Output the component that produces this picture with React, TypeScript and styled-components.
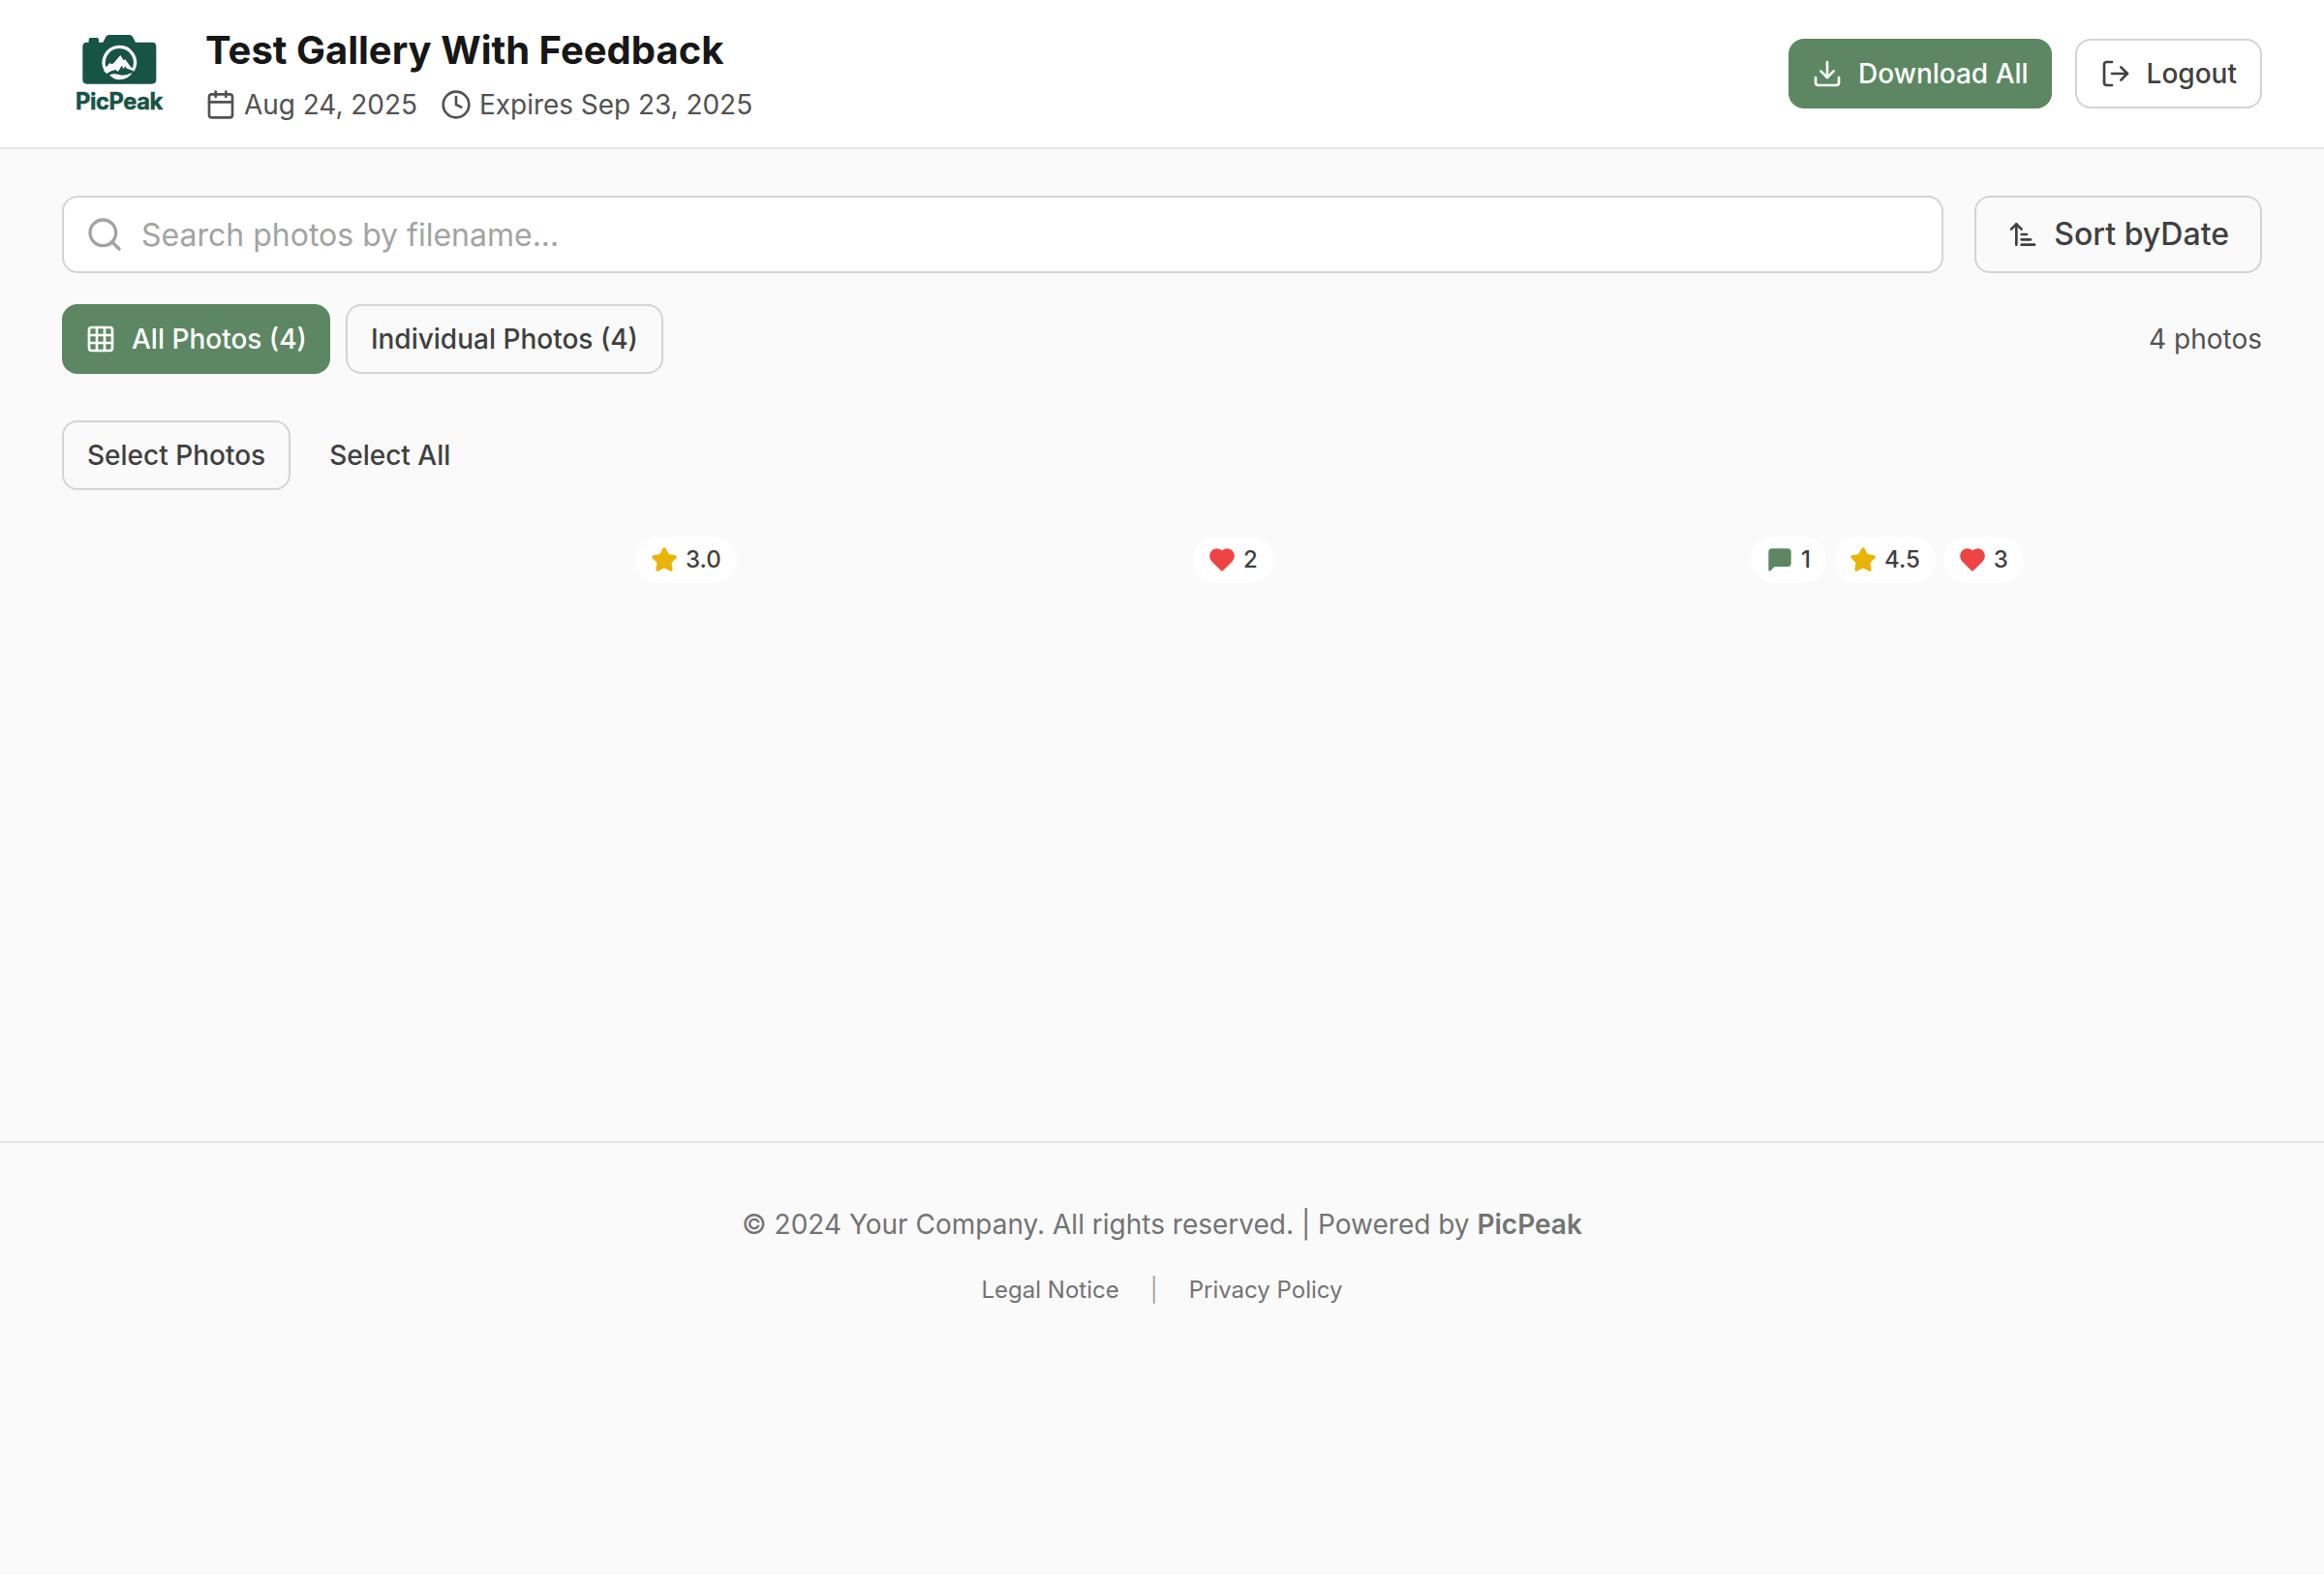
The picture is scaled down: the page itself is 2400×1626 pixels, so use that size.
import React from "react";
import styled, { createGlobalStyle, css } from "styled-components";
import { ArrowUpNarrowWide, Calendar, Clock, Download, Grid3x3, Search } from "lucide-react";

const color = {
  page: "#fafafa",
  surface: "#ffffff",
  primary: "#5c8762",
  brand: "#175446",
  line: "#e5e5e5",
  border: "#d4d4d4",
  title: "#171717",
  text: "#404040",
  subtle: "#525252",
  muted: "#737373",
  faint: "#a3a3a3",
  star: "#eab308",
  heart: "#ef4444",
};

const GlobalStyle = createGlobalStyle`
  *, *::before, *::after { box-sizing: border-box; }
  body {
    margin: 0;
    background: ${color.page};
    color: ${color.title};
    font-family: Inter, "Liberation Sans", sans-serif;
    -webkit-font-smoothing: antialiased;
  }
  h1, p { margin: 0; }
  button, input { font: inherit; }
`;

const Page = styled.div`
  min-height: 1626px;
`;

const Header = styled.header`
  display: flex;
  align-items: center;
  justify-content: space-between;
  padding: 24px 64px;
  background: ${color.surface};
  border-bottom: 2px solid ${color.line};
`;

const Identity = styled.div`
  display: flex;
  align-items: center;
  gap: 32px;
`;

const LogoSvg = styled.svg`
  display: block;
  width: 116px;
  height: 96px;
`;

const Title = styled.h1`
  font-size: 40px;
  line-height: 56px;
  font-weight: 700;
`;

const MetaRow = styled.div`
  display: flex;
  gap: 24px;
  margin-top: 8px;
`;

const Meta = styled.span`
  display: flex;
  align-items: center;
  gap: 8px;
  font-size: 28px;
  line-height: 40px;
  letter-spacing: -0.04px;
  color: ${color.subtle};
`;

const Row = styled.div<{ $gap: number; $top?: number }>`
  display: flex;
  align-items: center;
  gap: ${(p) => p.$gap}px;
  margin-top: ${(p) => p.$top ?? 0}px;
`;

const variants = {
  primary: css`
    background: ${color.primary};
    color: #fff;
  `,
  outline: css`
    border: 2px solid ${color.border};
    color: ${color.text};
  `,
  ghost: css`
    color: ${color.text};
  `,
};

const Button = styled.button<{ $variant: keyof typeof variants; $large?: boolean }>`
  display: inline-flex;
  align-items: center;
  justify-content: center;
  flex-shrink: 0;
  gap: 16px;
  height: ${(p) => (p.$large ? 80 : 72)}px;
  padding: 0 ${(p) => (p.$large ? 32 : 24)}px;
  border: 0;
  border-radius: 16px;
  background: transparent;
  font-size: ${(p) => (p.$large ? 32 : 28)}px;
  line-height: ${(p) => (p.$large ? 48 : 40)}px;
  font-weight: 500;
  white-space: nowrap;
  ${(p) => variants[p.$variant]}
`;

const Main = styled.main`
  padding: 48px 64px 96px;
`;

const SearchField = styled.label`
  display: flex;
  flex: 1;
  align-items: center;
  gap: 18px;
  height: 80px;
  padding: 0 32px 0 22px;
  border: 2px solid ${color.border};
  border-radius: 16px;
  background: ${color.surface};
  color: ${color.faint};
`;

const SearchInput = styled.input`
  flex: 1;
  padding: 2px 0 0;
  border: 0;
  outline: 0;
  background: transparent;
  font-size: 32px;
  line-height: 48px;
  color: ${color.title};
  &::placeholder {
    color: ${color.faint};
    opacity: 1;
  }
`;

const Count = styled.span`
  margin-left: auto;
  font-size: 28px;
  line-height: 40px;
  color: ${color.subtle};
`;

const PhotoGrid = styled.div`
  display: grid;
  grid-template-columns: repeat(4, 1fr);
  gap: 32px;
  margin-top: 32px;
`;

const Tile = styled.div`
  display: flex;
  align-items: flex-start;
  gap: 8px;
  aspect-ratio: 1;
  padding: 16px;
`;

const Badge = styled.span`
  display: flex;
  align-items: center;
  gap: 8px;
  padding: 8px 16px;
  border-radius: 24px;
  background: rgba(255, 255, 255, 0.9);
  font-size: 24px;
  line-height: 32px;
  font-weight: 500;
  color: ${color.text};
`;

const Footer = styled.footer`
  display: flex;
  flex-direction: column;
  align-items: center;
  gap: 32px;
  padding: 64px;
  border-top: 2px solid ${color.line};
  color: ${color.muted};
`;

const Copyright = styled.p`
  font-size: 28px;
  line-height: 40px;
  strong {
    font-weight: 600;
  }
`;

const Links = styled.nav`
  display: flex;
  gap: 32px;
  font-size: 24px;
  line-height: 32px;
`;

const Divider = styled.span`
  color: ${color.faint};
`;

const Logo = () => (
  <LogoSvg viewBox="12 24 348 288" role="img" aria-label="PicPeak">
    <path
      fill={color.brand}
      d="M95 71V63Q95 57 101 57H120Q126 57 126 63V71H139L148 54Q151 48 158 48H221Q228 48 231 54L240 71H291Q304 71 304 84V187Q304 200 291 200H89Q76 200 76 187V84Q76 71 89 71Z"
    />
    <path fill="none" stroke="#fff" strokeWidth="10" d="M148 158A48.5 48.5 0 1 1 233 156" />
    <path
      fill="#fff"
      d="M142 160L154 142L160 135L166 139L172 136L193 111L203 127L208 124L222 143L238 162L222 155L213 152L208 145L203 153L197 143L186 162L178 156L165 160L150 168Z"
    />
    <path fill="#fff" d="M159 172Q174 166 188 171Q206 177 230 165Q216 187 190 187Q171 187 159 172Z" />
    <text
      x="54"
      y="280"
      fill={color.brand}
      stroke={color.brand}
      strokeWidth="1.5"
      fontFamily="Inter, sans-serif"
      fontSize="71"
      fontWeight="700"
      textLength="271"
      lengthAdjust="spacing"
    >
      PicPeak
    </text>
  </LogoSvg>
);

const LogoutIcon = () => (
  <svg width="32" height="32" viewBox="0 0 24 24" fill="none" stroke="currentColor" strokeWidth="2" strokeLinecap="round" strokeLinejoin="round">
    <path d="M9 21H5a2 2 0 0 1-2-2V5a2 2 0 0 1 2-2h4" />
    <path d="m16 17 5-5-5-5M21 12H9" />
  </svg>
);

const badgeIcons = {
  comment: {
    fill: color.primary,
    d: "M21 15a2 2 0 0 1-2 2H7l-4 4V5a2 2 0 0 1 2-2h14a2 2 0 0 1 2 2z",
  },
  rating: {
    fill: color.star,
    d: "M11.525 2.295a.53.53 0 0 1 .95 0l2.31 4.679a2.123 2.123 0 0 0 1.595 1.16l5.166.756a.53.53 0 0 1 .294.904l-3.736 3.638a2.123 2.123 0 0 0-.611 1.878l.882 5.14a.53.53 0 0 1-.771.56l-4.618-2.428a2.122 2.122 0 0 0-1.973 0L6.396 21.01a.53.53 0 0 1-.77-.56l.881-5.139a2.122 2.122 0 0 0-.611-1.879L2.16 9.795a.53.53 0 0 1 .294-.906l5.165-.755a2.122 2.122 0 0 0 1.597-1.16z",
  },
  like: {
    fill: color.heart,
    d: "M19 14c1.49-1.46 3-3.21 3-5.5A5.5 5.5 0 0 0 16.5 3c-1.76 0-3 .5-4.5 2-1.5-1.5-2.74-2-4.5-2A5.5 5.5 0 0 0 2 8.5c0 2.3 1.5 4.05 3 5.5l7 7Z",
  },
};

type BadgeData = { kind: keyof typeof badgeIcons; value: string };

const FeedbackBadge = ({ kind, value }: BadgeData) => {
  const icon = badgeIcons[kind];
  return (
    <Badge>
      <svg width="28" height="28" viewBox="0 0 24 24" fill={icon.fill} stroke={icon.fill} strokeWidth="2" strokeLinecap="round" strokeLinejoin="round">
        <path d={icon.d} />
      </svg>
      {value}
    </Badge>
  );
};

const photos: BadgeData[][] = [
  [],
  [{ kind: "rating", value: "3.0" }],
  [{ kind: "like", value: "2" }],
  [
    { kind: "comment", value: "1" },
    { kind: "rating", value: "4.5" },
    { kind: "like", value: "3" },
  ],
];

export default function App() {
  return (
    <Page>
      <GlobalStyle />
      <Header>
        <Identity>
          <Logo />
          <div>
            <Title>Test Gallery With Feedback</Title>
            <MetaRow>
              <Meta>
                <Calendar size={32} />
                Aug 24, 2025
              </Meta>
              <Meta>
                <Clock size={32} />
                Expires Sep 23, 2025
              </Meta>
            </MetaRow>
          </div>
        </Identity>
        <Row $gap={24}>
          <Button $variant="primary">
            <Download size={32} />
            Download All
          </Button>
          <Button $variant="outline">
            <LogoutIcon />
            Logout
          </Button>
        </Row>
      </Header>

      <Main>
        <Row $gap={32}>
          <SearchField>
            <Search size={40} />
            <SearchInput placeholder="Search photos by filename..." />
          </SearchField>
          <Button $variant="outline" $large>
            <ArrowUpNarrowWide size={32} />
            <span>Sort byDate</span>
          </Button>
        </Row>
        <Row $gap={16} $top={32}>
          <Button $variant="primary">
            <Grid3x3 size={32} />
            All Photos (4)
          </Button>
          <Button $variant="outline">Individual Photos (4)</Button>
          <Count>4 photos</Count>
        </Row>
        <Row $gap={16} $top={48}>
          <Button $variant="outline">Select Photos</Button>
          <Button $variant="ghost">Select All</Button>
        </Row>
        <PhotoGrid>
          {photos.map((badges, i) => (
            <Tile key={i}>
              {badges.map((b) => (
                <FeedbackBadge key={b.kind} {...b} />
              ))}
            </Tile>
          ))}
        </PhotoGrid>
      </Main>

      <Footer>
        <Copyright>
          © 2024 Your Company. All rights reserved. | Powered by <strong>PicPeak</strong>
        </Copyright>
        <Links>
          <span>Legal Notice</span>
          <Divider>|</Divider>
          <span>Privacy Policy</span>
        </Links>
      </Footer>
    </Page>
  );
}
